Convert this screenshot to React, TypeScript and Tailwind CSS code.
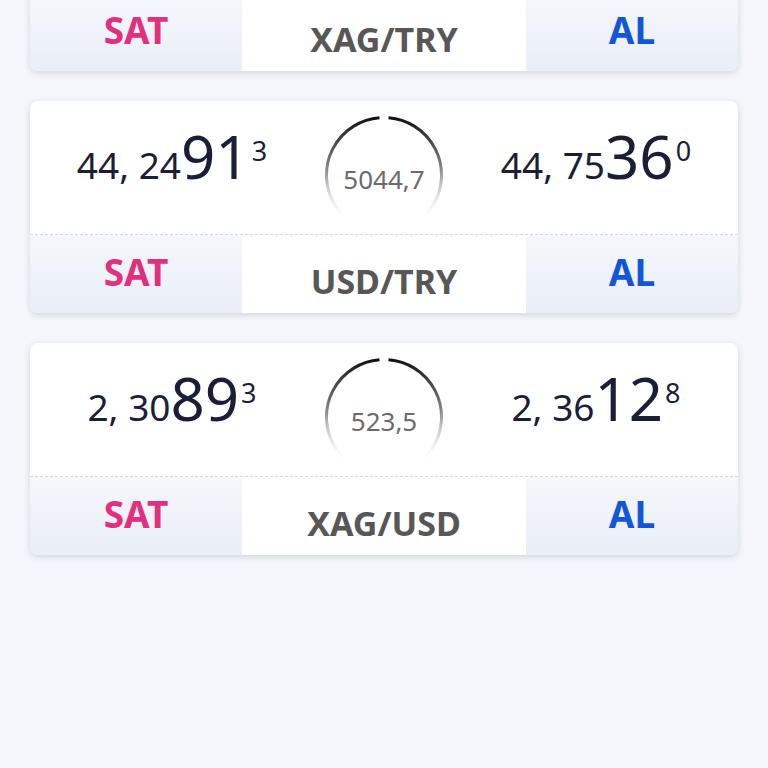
import React from "react";

type Quote = {
  pair: string;
  bidA: string;
  bidB: string;
  bidC: string;
  askA: string;
  askB: string;
  askC: string;
  spread: string;
};

const quotes: Quote[] = [
  { pair: "XAG/TRY", bidA: "0, 00", bidB: "00", bidC: "0", askA: "0, 00", askB: "00", askC: "0", spread: "0" },
  { pair: "USD/TRY", bidA: "44, 24", bidB: "91", bidC: "3", askA: "44, 75", askB: "36", askC: "0", spread: "5044,7" },
  { pair: "XAG/USD", bidA: "2, 30", bidB: "89", bidC: "3", askA: "2, 36", askB: "12", askC: "8", spread: "523,5" },
];

function Price({ a, b, c }: { a: string; b: string; c: string }) {
  return (
    <div
      className="flex shrink-0 items-baseline whitespace-nowrap text-[#1b1e36]"
      style={{ fontFamily: '"Noto Sans", "Open Sans", sans-serif' }}
    >
      <span className="text-[37px] leading-none">{a}</span>
      <span className="text-[60px] leading-none">{b}</span>
      <span className="relative top-[-18px] text-[27px] leading-none ml-[2px]">{c}</span>
    </div>
  );
}

function Ring({ value, id }: { value: string; id: string }) {
  return (
    <div className="relative w-[120px] h-[120px] flex items-center justify-center">
      <svg className="absolute inset-0" width="120" height="120" viewBox="0 0 120 120">
        <defs>
          <linearGradient id={id} x1="0" y1="0" x2="0" y2="1">
            <stop offset="0" stopColor="#111111" />
            <stop offset="0.45" stopColor="#8a8a8a" />
            <stop offset="0.92" stopColor="#ffffff" stopOpacity="0" />
          </linearGradient>
        </defs>
        <path
          d="M 64.5 2.7 A 57.5 57.5 0 1 1 55.5 2.7"
          fill="none"
          stroke={`url(#${id})`}
          strokeWidth="3"
        />
      </svg>
      <span
        className="relative text-[26px] leading-none text-[#6b6b6b] mt-[8px]"
        style={{ fontFamily: '"Noto Sans", "Open Sans", sans-serif' }}
      >
        {value}
      </span>
    </div>
  );
}

function Card({ q, idx, first }: { q: Quote; idx: number; first?: boolean }) {
  return (
    <div
      className={`bg-white rounded-[8px] shadow-[0_2px_6px_rgba(40,50,80,0.16)] overflow-hidden ${first ? "mt-[-141px]" : ""}`}
    >
      <div className="h-[134px] grid grid-cols-[284px_140px_284px] items-start border-b border-dashed border-[#d6d9e0]">
        <div className="flex justify-center pt-[25px]">
          <Price a={q.bidA} b={q.bidB} c={q.bidC} />
        </div>
        <div className="flex justify-center pt-[14px]">
          <Ring value={q.spread} id={`g${idx}`} />
        </div>
        <div className="flex justify-center pt-[25px]">
          <Price a={q.askA} b={q.askB} c={q.askC} />
        </div>
      </div>
      <div
        className="h-[78px] grid grid-cols-[212px_284px_212px] font-bold"
        style={{ fontFamily: '"Noto Sans", "Open Sans", sans-serif' }}
      >
        <div className="flex items-center justify-center bg-gradient-to-b from-[#f5f7fb] to-[#e9eef7] text-[#e2307f] text-[37px] pb-[4px]">
          SAT
        </div>
        <div className="flex items-center justify-center bg-white text-[#575757] text-[34px] pt-[14px]">
          {q.pair}
        </div>
        <div className="flex items-center justify-center bg-gradient-to-b from-[#f5f7fb] to-[#e9eef7] text-[#1456d8] text-[37px] pb-[4px]">
          AL
        </div>
      </div>
    </div>
  );
}

export default function App() {
  return (
    <div className="w-[768px] h-[768px] overflow-hidden bg-[#f4f6fb]">
      <div className="px-[30px] flex flex-col gap-[30px]">
        {quotes.map((q, i) => (
          <Card key={q.pair} q={q} idx={i} first={i === 0} />
        ))}
      </div>
    </div>
  );
}
